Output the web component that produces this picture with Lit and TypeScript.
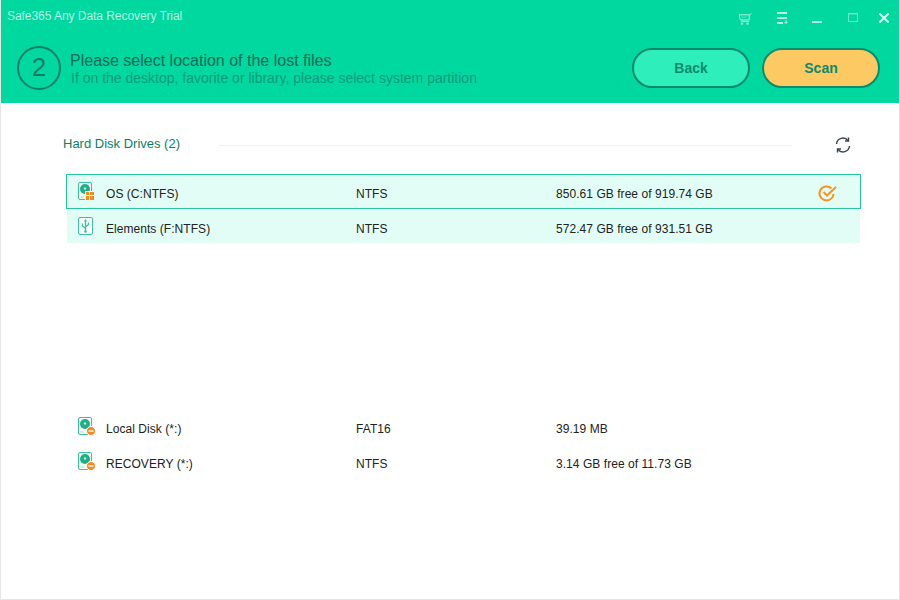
import { LitElement, html, css, svg } from "lit";
import { customElement } from "lit/decorators.js";

const disk = (badge: unknown) => html`<svg class="ico" width="20" height="20" viewBox="0 0 20 20" fill="none">
  <rect x="0.5" y="0.5" width="13" height="17" rx="1.5" fill="#f4fdfa" stroke="#3cc19a"/>
  <circle cx="7" cy="7" r="5" fill="#1fae87"/>
  <circle cx="7" cy="6.500" r="1.200" fill="#bfeedd"/>
  <path d="M2.500 15h3" stroke="#9adcc8"/>
  ${badge}
</svg>`;
const win = svg`<rect x="7" y="9" width="10" height="10" fill="#e2fdf5"/><rect x="8" y="10" width="3" height="3" fill="#f58a1f"/><rect x="12" y="10" width="4" height="3" fill="#f58a1f"/><rect x="8" y="14" width="3" height="4" fill="#f58a1f"/><rect x="12" y="14" width="4" height="4" fill="#f58a1f"/>`;
const minus = svg`<circle cx="13" cy="14" r="4.500" fill="#f58a1f" stroke="#fff"/><path d="M10.500 14h5" stroke="#fff" stroke-width="1.400"/>`;
const usb = html`<svg class="ico" width="20" height="20" viewBox="0 0 20 20" fill="none">
  <rect x="0.500" y="0.500" width="14" height="17" rx="1.500" fill="#f4fdfa" stroke="#3cc19a"/>
  <path d="M7.500 3.500v11M7.500 11.500L4.500 9V6.500M7.500 10L10.500 7.500V5.500" stroke="#3cc19a" stroke-width="1.300"/>
  <path d="M6 4.500L7.500 2L9 4.500z" fill="#3cc19a"/>
  <circle cx="7.500" cy="14.500" r="1.300" fill="#3cc19a"/>
</svg>`;

const rows = [
  { icon: disk(win), name: "OS (C:NTFS)", fs: "NTFS", size: "850.61 GB free of 919.74 GB", cls: "selected" },
  { icon: usb, name: "Elements (F:NTFS)", fs: "NTFS", size: "572.47 GB free of 931.51 GB", cls: "tint" },
];
const lost = [
  { icon: disk(minus), name: "Local Disk (*:)", fs: "FAT16", size: "39.19 MB", cls: "" },
  { icon: disk(minus), name: "RECOVERY (*:)", fs: "NTFS", size: "3.14 GB free of 11.73 GB", cls: "" },
];

@customElement("app-root")
export class AppRoot extends LitElement {
  static styles = css`
    :host { display: block; width: 900px; height: 600px; box-sizing: border-box; background: #fff;
      border: 1px solid #e6e6e6; border-top: 0; font-family: "Liberation Sans", Arial, sans-serif; overflow: hidden; }
    .head { background: #00d8a0; height: 103px; margin: 0 -1px; display: flex; flex-direction: column; }
    .titlebar { height: 32px; display: flex; align-items: center; justify-content: space-between; padding: 0 11px 0 7px; }
    .apptitle { font-size: 12px; color: #b4f3e0; margin-top: -1px; letter-spacing: -0.05px; }
    .winbtns { display: flex; align-items: center; margin-top: 4px; }
    .winbtns svg { display: block; }
    .w2 { margin-left: 24px; }
    .w3 { margin-left: 24px; }
    .w4 { margin-left: 26px; }
    .w5 { margin-left: 21px; }
    .step { flex: 1; display: flex; align-items: center; padding: 0 20px 0 17px; margin-top: -2px; }
    .num { width: 44px; height: 44px; box-sizing: border-box; border: 2px solid #0b7f65; border-radius: 50%;
      color: #0b7f65; font-size: 26px; display: flex; align-items: center; justify-content: center; margin: 2px 9px 0 0; }
    .texts { flex: 1; display: flex; flex-direction: column; margin-top: 5px; }
    .t1 { font-size: 16px; line-height: 18px; color: #0b6b55; }
    .t2 { font-size: 14px; line-height: 17px; color: #0a9c78; padding-left: 1px; }
    .btn { width: 118px; height: 40px; box-sizing: border-box; border-radius: 20px; border: 2px solid #0b8a6c;
      font-size: 14px; font-weight: 700; color: #0b8a6c; display: flex; align-items: center; justify-content: center; margin-left: 12px; margin-top: 2px; }
    .back { background: #2eefbc; }
    .scan { background: #fdc962; }
    .section { display: flex; align-items: center; padding: 0 48px 0 62px; height: 34px; margin-top: 25px; }
    .stitle { font-size: 13px; color: #0b7f65; width: 156px; margin-top: -3px; }
    .rule { flex: 1; height: 1px; background: #f0f0f0; margin-right: 43px; }
    .list { display: flex; flex-direction: column; margin: 12px 38px 0 65px; }
    .lost { margin-top: 168px; }
    .row { height: 35px; box-sizing: border-box; display: grid; grid-template-columns: 250px 200px 1fr 42px; align-items: center;
      font-size: 12px; letter-spacing: 0.05px; color: #222; padding-left: 40px; position: relative; }
    .row .ico { position: absolute; left: 12px; top: 6px; }
    .selected { background: #e2fdf5; border: 1px solid #24c79c; padding: 5px 0 0 39px; }
    .tint { background: #e2fdf5; margin: 1px 1px 0; height: 33px; padding: 4px 0 0 39px; }
    .selected .ico, .tint .ico { left: 11px; top: 7px; }
    .check { display: block; margin-top: -3px; }
  `;

  private row(r: any) {
    return html`<div class="row ${r.cls}">
      ${r.icon}
      <span>${r.name}</span><span>${r.fs}</span><span>${r.size}</span>
      ${r.cls === "selected" ? html`<svg class="check" width="20" height="18" viewBox="0 0 20 18" fill="none">
        <path d="M13.500 4.500A7 7 0 1 0 15.500 10" stroke="#f7931e" stroke-width="2"/>
        <path d="M5.500 8l3.500 3.500L18 3" stroke="#f7931e" stroke-width="2"/>
      </svg>` : html`<span></span>`}
    </div>`;
  }

  render() {
    return html`
      <div class="head">
        <div class="titlebar">
          <span class="apptitle">Safe365 Any Data Recovery Trial</span>
          <div class="winbtns">
            <svg width="13" height="13" viewBox="0 0 14 13" fill="none" stroke="#b4f3e0"><path d="M0 2.500h11V8H1.500L0 2.500zM11 3L13.500 1"/><path d="M3 5h6" stroke-dasharray="1 1"/><path d="M2 9.500h9"/><rect x="2" y="11" width="2.500" height="2" fill="#b4f3e0" stroke="none"/><rect x="8" y="11" width="2.500" height="2" fill="#b4f3e0" stroke="none"/></svg>
            <svg class="w2" width="12" height="12" viewBox="0 0 12 12" fill="none" stroke="#b4f3e0" stroke-width="2"><path d="M1 1h10M1 6h10M1 11h6"/><path d="M10 8v4M8.500 10.500h3" stroke-width="1"/></svg>
            <svg class="w3" width="10" height="12" viewBox="0 0 10 12"><rect y="9" width="10" height="2" fill="#b4f3e0"/></svg>
            <svg class="w4" width="10" height="10" viewBox="0 0 10 10" fill="none" stroke="#6fe6c6"><rect x="0.500" y="0.500" width="9" height="8" stroke-width="1"/><path d="M0 1h10"/></svg>
            <svg class="w5" width="10" height="10" viewBox="0 0 10 10" stroke="#d8fbf0" stroke-width="2"><path d="M0.500 0.500l9 9M9.500 0.500l-9 9"/></svg>
          </div>
        </div>
        <div class="step">
          <div class="num">2</div>
          <div class="texts">
            <div class="t1">Please select location of the lost files</div>
            <div class="t2">If on the desktop, favorite or library, please select system partition</div>
          </div>
          <div class="btn back">Back</div>
          <div class="btn scan">Scan</div>
        </div>
      </div>
      <div class="section">
        <div class="stitle">Hard Disk Drives (2)</div>
        <div class="rule"></div>
        <svg width="16" height="16" viewBox="0 0 16 16" fill="none" stroke="#36454f" stroke-width="1.400">
          <path d="M1.500 7A6.500 6.500 0 0 1 13 3.500"/><path d="M14.500 9A6.500 6.500 0 0 1 3 12.500"/>
          <path d="M13.500 0.500V4H10" /><path d="M2.500 15.500V12H6"/>
        </svg>
      </div>
      <div class="list">${rows.map((r) => this.row(r))}</div>
      <div class="list lost">${lost.map((r) => this.row(r))}</div>
    `;
  }
}
